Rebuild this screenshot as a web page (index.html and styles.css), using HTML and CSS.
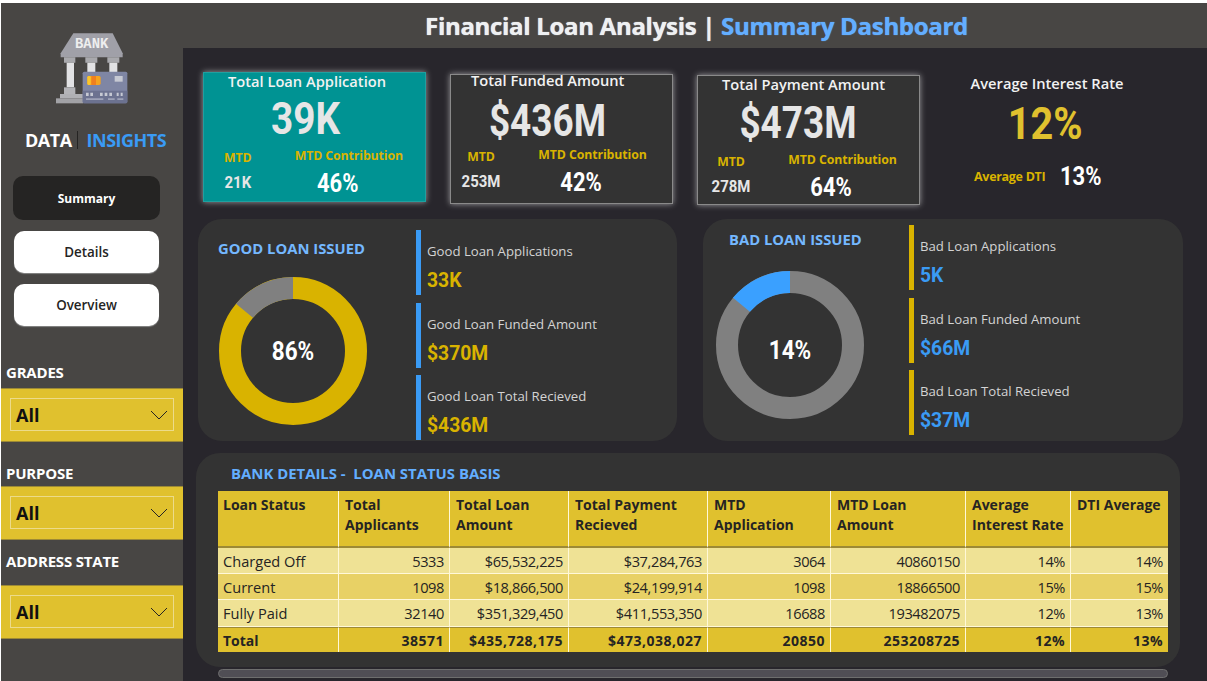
FILE: index.html
```html
<!DOCTYPE html>
<html lang="en">
  <head>
    <meta charset="utf-8" />
    <meta name="viewport" content="width=device-width, initial-scale=1" />
    <title>Financial Loan Analysis | Summary Dashboard</title>
    <link rel="stylesheet" href="styles.css">
  </head>
  <body>
    <div class="app">
      <!--left navigation and slicers-->
      <aside class="sidebar">
        <svg class="logo" viewBox="0 0 300 300" width="100" height="100">
          <path d="M100 40H218L248 100V112H62V100Z" fill="#a0a0a8"/>
          <text x="155" y="85" text-anchor="middle" textLength="100" lengthAdjust="spacingAndGlyphs" class="logo-text">BANK</text>
          <path d="M72 112H106V128H72ZM136 112H172V128H136ZM202 112H238V128H202Z" fill="#a9a9ad"/>
          <path d="M80 128H102V202H80ZM142 128H166V160H142ZM208 128H232V160H208Z" fill="#e2e2e4"/>
          <path d="M72 202H106V222H72Z" fill="#b4b4b8"/>
          <path d="M60 222H130V235H60Z" fill="#b0b0b4"/>
          <path d="M48 235H130V250H48Z" fill="#a2a2a6"/>
          <rect x="128" y="155" width="134" height="95" rx="5" fill="#7f86a4"/>
          <path d="M128 212H262V245Q262 250 257 250H133Q128 250 128 245Z" fill="#6c7290"/>
          <rect x="142" y="168" width="40" height="27" rx="5" fill="#f5a41f"/>
          <rect x="154" y="168" width="14" height="27" fill="#f07f1e"/>
          <rect x="142" y="168" width="10" height="27" rx="4" fill="#fbc62a"/>
          <rect x="224" y="168" width="24" height="17" fill="#c6c9d3"/>
          <path d="M138 218H146V228H138ZM151 218H159V228H151ZM180 218H188V228H180ZM194 218H202V228H194ZM208 218H216V228H208ZM230 218H236V228H230ZM242 218H248V228H242Z" fill="#c6c9d3"/>
          <path d="M138 235H190V240H138ZM204 235H224V240H204ZM232 235H250V240H232Z" fill="#9ea3b8"/>
        </svg>
        <div class="brand"><span>DATA</span> <i class="brand-sep"></i> <span class="brand-blue">INSIGHTS</span></div>
        <nav class="nav">
          <a class="nav-btn active">Summary</a>
          <a class="nav-btn">Details</a>
          <a class="nav-btn">Overview</a>
        </nav>
        <div class="filter filter-grades">
          <div class="filter-label">GRADES</div>
          <div class="slicer"><div class="slicer-box">All
            <svg viewBox="0 0 18 10" width="18" height="10"><path d="M1 1L9 9L17 1" fill="none" stroke="#252423"/></svg>
          </div></div>
        </div>
        <div class="filter filter-purpose">
          <div class="filter-label">PURPOSE</div>
          <div class="slicer"><div class="slicer-box">All
            <svg viewBox="0 0 18 10" width="18" height="10"><path d="M1 1L9 9L17 1" fill="none" stroke="#252423"/></svg>
          </div></div>
        </div>
        <div class="filter filter-state">
          <div class="filter-label">ADDRESS STATE</div>
          <div class="slicer"><div class="slicer-box">All
            <svg viewBox="0 0 18 10" width="18" height="10"><path d="M1 1L9 9L17 1" fill="none" stroke="#252423"/></svg>
          </div></div>
        </div>
      </aside>

      <div class="content">
        <header class="topbar">
          <h1>Financial Loan Analysis | <span>Summary Dashboard</span></h1>
        </header>

        <!--kpi cards-->
        <section class="kpis">
          <div class="card card-teal">
            <div class="card-title">Total Loan Application</div>
            <div class="card-big">39K</div>
            <div class="card-foot">
              <div class="foot-col"><div class="foot-label foot-mtd">MTD</div><div class="foot-small">21K</div></div>
              <div class="foot-col foot-wide"><div class="foot-label">MTD Contribution</div><div class="foot-pct">46%</div></div>
            </div>
          </div>
          <div class="card card-funded">
            <div class="card-title">Total Funded Amount</div>
            <div class="card-big">$436M</div>
            <div class="card-foot">
              <div class="foot-col"><div class="foot-label foot-mtd">MTD</div><div class="foot-small">253M</div></div>
              <div class="foot-col foot-wide"><div class="foot-label">MTD Contribution</div><div class="foot-pct">42%</div></div>
            </div>
          </div>
          <div class="card card-payment">
            <div class="card-title">Total Payment Amount</div>
            <div class="card-big">$473M</div>
            <div class="card-foot">
              <div class="foot-col"><div class="foot-label foot-mtd">MTD</div><div class="foot-small">278M</div></div>
              <div class="foot-col foot-wide"><div class="foot-label">MTD Contribution</div><div class="foot-pct">64%</div></div>
            </div>
          </div>
          <div class="rate">
            <div class="card-title">Average Interest Rate</div>
            <div class="rate-big">12%</div>
            <div class="rate-row"><span class="rate-label">Average DTI</span><span class="rate-value">13%</span></div>
          </div>
        </section>

        <!--good and bad loan panels-->
        <section class="loans">
          <div class="panel panel-good">
            <div class="panel-left">
              <div class="panel-title">GOOD LOAN ISSUED</div>
              <div class="donut">
                <svg viewBox="0 0 148 148" width="148" height="148">
                  <circle cx="74" cy="74" r="63" fill="none" stroke="#d9b300" stroke-width="22"/>
                  <circle cx="74" cy="74" r="63" fill="none" stroke="#808080" stroke-width="22" pathLength="100" stroke-dasharray="14 86" transform="rotate(-140.4 74 74)"/>
                </svg>
                <div class="donut-label">86%</div>
              </div>
            </div>
            <div class="stats">
              <div class="stat"><div class="stat-label">Good Loan Applications</div><div class="stat-value">33K</div></div>
              <div class="stat"><div class="stat-label">Good Loan Funded Amount</div><div class="stat-value">$370M</div></div>
              <div class="stat"><div class="stat-label">Good Loan Total Recieved</div><div class="stat-value">$436M</div></div>
            </div>
          </div>
          <div class="panel panel-bad">
            <div class="panel-left">
              <div class="panel-title">BAD LOAN ISSUED</div>
              <div class="donut">
                <svg viewBox="0 0 148 148" width="148" height="148">
                  <circle cx="74" cy="74" r="63" fill="none" stroke="#808080" stroke-width="22"/>
                  <circle cx="74" cy="74" r="63" fill="none" stroke="#3aa0ff" stroke-width="22" pathLength="100" stroke-dasharray="14 86" transform="rotate(-140.4 74 74)"/>
                </svg>
                <div class="donut-label">14%</div>
              </div>
            </div>
            <div class="stats">
              <div class="stat"><div class="stat-label">Bad Loan Applications</div><div class="stat-value">5K</div></div>
              <div class="stat"><div class="stat-label">Bad Loan Funded Amount</div><div class="stat-value">$66M</div></div>
              <div class="stat"><div class="stat-label">Bad Loan Total Recieved</div><div class="stat-value">$37M</div></div>
            </div>
          </div>
        </section>

        <!--details table-->
        <section class="details">
          <div class="details-title">BANK DETAILS -&nbsp; LOAN STATUS BASIS</div>
          <table class="grid">
            <thead>
              <tr>
                <th>Loan Status</th><th>Total Applicants</th><th>Total Loan Amount</th><th>Total Payment Recieved</th>
                <th>MTD Application</th><th>MTD Loan Amount</th><th>Average Interest Rate</th><th>DTI Average</th>
              </tr>
            </thead>
            <tbody>
              <tr class="odd"><td>Charged Off</td><td>5333</td><td>$65,532,225</td><td>$37,284,763</td><td>3064</td><td>40860150</td><td>14%</td><td>14%</td></tr>
              <tr class="even"><td>Current</td><td>1098</td><td>$18,866,500</td><td>$24,199,914</td><td>1098</td><td>18866500</td><td>15%</td><td>15%</td></tr>
              <tr class="odd"><td>Fully Paid</td><td>32140</td><td>$351,329,450</td><td>$411,553,350</td><td>16688</td><td>193482075</td><td>12%</td><td>13%</td></tr>
            </tbody>
            <tfoot>
              <tr><td>Total</td><td>38571</td><td>$435,728,175</td><td>$473,038,027</td><td>20850</td><td>253208725</td><td>12%</td><td>13%</td></tr>
            </tfoot>
          </table>
        </section>
        <div class="scrollbar"></div>
      </div>
    </div>
  </body>
</html>
```

FILE: styles.css
```css
*{
    box-sizing: border-box;
}

html, body{
    margin: 0;
    height: 100%;
    overflow: hidden;
    background-color: #fff;
}

body{
    font-family: "Open Sans", "Noto Sans", sans-serif;
    color: #fff;
}

.app{
    display: flex;
    height: 678px;
    margin: 3px 0 0 1px;
    background-color: #28262c;
}

/* sidebar */
.sidebar{
    width: 182px;
    flex-shrink: 0;
    background-color: #484644;
    display: flex;
    flex-direction: column;
}

.logo{
    margin: 17px 0 0 39px;
    display: block;
}

.logo-text{
    font-family: "Liberation Mono", monospace;
    font-weight: bold;
    font-size: 46px;
    fill: #eee;
}

.brand{
    margin: 7px 0 0 24px;
    height: 26px;
    font-size: 18px;
    font-weight: 700;
    letter-spacing: -0.5px;
    display: flex;
    align-items: center;
    gap: 5px;
}

.brand-sep{
    width: 1px;
    height: 18px;
    margin-right: 4px;
    background-color: #252423;
}

.brand-blue{
    color: #3a9bf5;
}

.nav{
    margin: 23px 0 0 13px;
    display: flex;
    flex-direction: column;
}

.nav-btn{
    width: 145px;
    height: 42px;
    margin: 0 0 11px 0;
    border-radius: 10px;
    background-color: #fff;
    box-shadow: 0 1px 1px #888;
    color: #252423;
    font-size: 13.4px;
    font-weight: 600;
    display: flex;
    align-items: center;
    justify-content: center;
}

.nav-btn.active{
    width: 147px;
    height: 44px;
    margin: 0 0 11px -1px;
    background-color: #252423;
    color: #fff;
    font-size: 12px;
    font-weight: 700;
    box-shadow: none;
}

.filter-label{
    margin-left: 5px;
    font-size: 15px;
    font-weight: 700;
    line-height: 20px;
    letter-spacing: -0.2px;
}

.filter-grades{
    margin-top: 25px;
}

.filter-purpose{
    margin-top: 21px;
}

.filter-state{
    margin-top: 11px;
}

.filter-grades .filter-label{
    margin-bottom: 6px;
}

.filter-purpose .filter-label{
    margin-bottom: 3px;
}

.filter-state .filter-label{
    margin-bottom: 14px;
}

.slicer{
    height: 54px;
    padding: 9px 9px 0 9px;
    background-color: #e0c12e;
    border-top: 1px solid #9d8a35;
    border-bottom: 1px solid #9d8a35;
}

.slicer-box{
    height: 33px;
    padding: 0 5px;
    border: 1px solid #ecdb8a;
    color: #111;
    font-size: 18px;
    font-weight: 700;
    display: flex;
    align-items: center;
    justify-content: space-between;
}

/* main area */
.content{
    flex: 1;
    min-width: 0;
}

.topbar{
    height: 45px;
    background-color: #484644;
    display: flex;
    align-items: center;
    justify-content: center;
    padding-left: 3px;
}

.topbar h1{
    margin: 0;
    font-size: 24px;
    font-weight: 700;
    letter-spacing: -0.3px;
    color: #eef0f2;
    text-shadow: 0 0 1px currentColor;
}

.topbar span{
    color: #63aeff;
}

.kpis{
    display: flex;
    align-items: flex-start;
    height: 171px;
    padding-left: 20px;
}

.card{
    width: 223px;
    height: 130px;
    background-color: #333;
    border: 1px solid #8a8a8a;
    box-shadow: 0 0 6px rgba(255,255,255,0.55);
}

.card-teal{
    margin-top: 24px;
    background-color: #009393;
    border-color: #20a0a0;
}

.card-funded{
    margin: 26px 0 0 24px;
}

.card-payment{
    margin: 27px 0 0 24px;
}

.card-title{
    font-size: 14.66px;
    font-weight: 600;
    line-height: 20px;
    text-align: center;
    color: #f2f2f2;
}

.card .card-title{
    text-align: left;
    padding-left: 24px;
}

.card-teal .card-title{
    margin: -2px 0 2px 0;
}

.card-funded .card-title{
    margin: -5px 0 5px 0;
    padding-left: 20px;
}

.card-payment .card-title{
    margin: -2px 0 3px 0;
}

.card-big{
    height: 52px;
    font-family: Roboto, sans-serif;
    font-size: 44px;
    font-weight: 700;
    line-height: 52px;
    text-align: center;
    color: #e6e6e6;
    transform: scaleX(0.88);
}

.card-teal .card-big{
    margin-right: 18px;
}

.card-funded .card-big{
    margin-right: 28px;
    transform: scaleX(0.84);
}

.card-payment .card-big{
    margin-right: 21px;
    transform: scaleX(0.84);
}

.card-foot{
    display: flex;
    margin-top: 2px;
}

.card-teal .card-foot{
    margin: 1px 0 0 -1px;
}

.card-funded .card-foot{
    margin: -2px 0 0 -5px;
}

.card-payment .card-foot{
    margin: 1px 0 0 -2px;
}

.foot-col{
    width: 70px;
    text-align: center;
}

.foot-wide{
    width: 153px;
}

.foot-label{
    font-size: 12.3px;
    font-weight: 700;
    line-height: 20px;
    letter-spacing: -0.1px;
    color: #d9b300;
}

.foot-mtd{
    margin-top: 2px;
}

.foot-small{
    font-family: Roboto, sans-serif;
    font-size: 17px;
    font-weight: 700;
    line-height: 28px;
    color: #e6e6e6;
    transform: scaleX(0.88);
}

.foot-pct{
    padding-right: 26px;
    font-family: Roboto, sans-serif;
    font-size: 25px;
    font-weight: 700;
    line-height: 36px;
    transform: scaleX(0.88);
}

.rate{
    width: 180px;
    margin: 25px 0 0 37px;
}

.rate-big{
    height: 60px;
    margin-top: 1px;
    padding-right: 4px;
    font-family: Roboto, sans-serif;
    font-size: 44px;
    font-weight: 700;
    line-height: 60px;
    text-align: center;
    color: #e0c12e;
    transform: scaleX(0.9);
}

.rate-row{
    display: flex;
    align-items: center;
    margin: 8px 0 0 17px;
    gap: 15px;
}

.rate-label{
    font-size: 12.5px;
    font-weight: 700;
    letter-spacing: -0.3px;
    color: #d9b300;
}

.rate-value{
    font-family: Roboto, sans-serif;
    font-size: 25px;
    font-weight: 700;
    transform: scaleX(0.88);
    transform-origin: left center;
}

.loans{
    display: flex;
    padding-left: 15px;
    gap: 26px;
}

.panel{
    width: 479px;
    height: 222px;
    border-radius: 24px;
    background-color: #333;
    display: flex;
}

.panel-bad{
    width: 480px;
}

.panel-left{
    width: 218px;
    padding-left: 20px;
    flex-shrink: 0;
}

.panel-title{
    font-size: 14.8px;
    font-weight: 700;
    line-height: 20px;
    color: #74b8ff;
}

.panel-good .panel-title{
    margin: 19px 0 0 0;
}

.panel-bad .panel-title{
    margin: 10px 0 0 6px;
}

.donut{
    width: 148px;
    height: 148px;
    position: relative;
}

.panel-good .donut{
    margin: 19px 0 0 1px;
}

.panel-bad .donut{
    margin: 22px 0 0 -7px;
}

.donut-label{
    position: absolute;
    inset: 0;
    display: flex;
    align-items: center;
    justify-content: center;
    font-family: Roboto, sans-serif;
    font-size: 25px;
    font-weight: 700;
    transform: scaleX(0.9);
}

.panel-bad .donut-label{
    padding-top: 10px;
}

.stats{
    display: flex;
    flex-direction: column;
    gap: 7.5px;
}

.panel-good .stats{
    margin-top: 11px;
}

.panel-bad .stats{
    margin: 6px 0 0 -12px;
}

.stat{
    width: 240px;
    height: 65px;
    padding: 11px 0 0 6px;
    border-left: 5px solid #3a9bf5;
}

.panel-bad .stat{
    border-left-color: #d9b300;
}

.stat-label{
    font-size: 13.2px;
    line-height: 20px;
    color: #d4d4d4;
}

.stat-value{
    margin-top: 6px;
    font-family: Roboto, sans-serif;
    font-size: 21px;
    font-weight: 700;
    line-height: 26px;
    color: #d9b300;
    transform: scaleX(0.92);
    transform-origin: left center;
}

.panel-bad .stat-value{
    color: #3a9bf5;
}

.details{
    width: 984px;
    height: 214px;
    margin: 12px 0 0 13px;
    padding: 10px 0 0 22px;
    border-radius: 24px;
    background-color: #333;
}

.details-title{
    margin-left: 13px;
    height: 28px;
    font-size: 14.9px;
    font-weight: 700;
    line-height: 20px;
    color: #63aeff;
}

.grid{
    width: 950px;
    table-layout: fixed;
    border-collapse: separate;
    border-spacing: 0;
    color: #252423;
    font-size: 14px;
}

.grid th:nth-child(1){ width: 120px; }
.grid th:nth-child(2){ width: 111px; }
.grid th:nth-child(3){ width: 119px; }
.grid th:nth-child(4){ width: 139px; }
.grid th:nth-child(5){ width: 123px; }
.grid th:nth-child(6){ width: 135px; }
.grid th:nth-child(7){ width: 105px; }
.grid th:nth-child(8){ width: 98px; }

.grid th{
    height: 57px;
    padding: 4px 4px 0 6px;
    vertical-align: top;
    text-align: left;
    font-weight: 700;
    line-height: 20px;
    background-color: #e0c12e;
    border-left: 1px solid #fff8d8;
    border-bottom: 2px solid #9d8a35;
}

.grid td{
    height: 26px;
    padding: 0 5px 0 0;
    font-size: 14.6px;
    letter-spacing: -0.4px;
    text-align: right;
    white-space: nowrap;
    border-left: 1px solid #fff8d8;
    border-bottom: 1px solid #fff8d8;
}

.grid th:first-child,
.grid td:first-child{
    border-left: 0;
}

.grid th:first-child{
    padding-left: 5px;
}

.grid td:first-child{
    padding-left: 5px;
    letter-spacing: 0;
    text-align: left;
}

.grid tbody tr:last-child td{
    height: 27px;
}

.odd td{
    background-color: #efe295;
}

.even td{
    background-color: #e8d165;
}

.grid tfoot td{
    height: 25px;
    font-size: 14px;
    font-weight: 700;
    letter-spacing: 0.5px;
    background-color: #e0c12e;
    border-top: 1px solid #9d8a35;
    border-bottom: 0;
}

.grid tfoot td:first-child{
    letter-spacing: 0;
}

.scrollbar{
    width: 950px;
    height: 9px;
    margin: 2px 0 0 35px;
    border: 1px solid #6e6e6e;
    border-radius: 5px;
    background-color: #504e55;
}
```
